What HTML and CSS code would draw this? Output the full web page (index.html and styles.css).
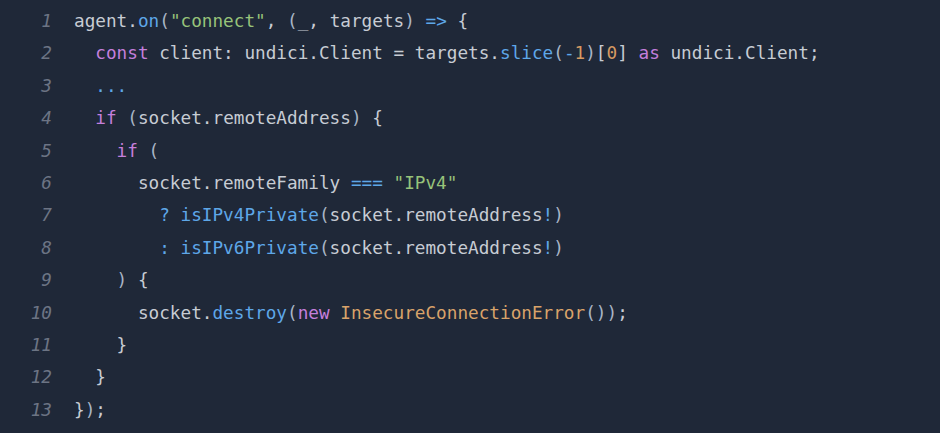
FILE: index.html
```html
<!DOCTYPE html>
<html>
<head>
<meta charset="utf-8">
<link rel="stylesheet" href="styles.css">
</head>
<body>
<div class="code">
<div class="ln"><span class="num">1</span><span class="src">agent.<span class="fn">on</span><span class="p">(</span><span class="str">"connect"</span>, <span class="p">(</span>_, targets<span class="p">)</span> <span class="op">=&gt;</span> {</span></div>
<div class="ln"><span class="num">2</span><span class="src">  <span class="kw">const</span> client: undici.Client = targets.<span class="fn">slice</span><span class="p">(</span><span class="op">-</span><span class="nm">1</span><span class="p">)</span>[<span class="nm">0</span>] <span class="kw">as</span> undici.Client;</span></div>
<div class="ln"><span class="num">3</span><span class="src">  <span class="op">...</span></span></div>
<div class="ln"><span class="num">4</span><span class="src">  <span class="kw">if</span> <span class="p">(</span>socket.remoteAddress<span class="p">)</span> {</span></div>
<div class="ln"><span class="num">5</span><span class="src">    <span class="kw">if</span> <span class="p">(</span></span></div>
<div class="ln"><span class="num">6</span><span class="src">      socket.remoteFamily <span class="op">===</span> <span class="str">"IPv4"</span></span></div>
<div class="ln"><span class="num">7</span><span class="src">        <span class="op">?</span> <span class="fn">isIPv4Private</span><span class="p">(</span>socket.remoteAddress<span class="op">!</span><span class="p">)</span></span></div>
<div class="ln"><span class="num">8</span><span class="src">        <span class="op">:</span> <span class="fn">isIPv6Private</span><span class="p">(</span>socket.remoteAddress<span class="op">!</span><span class="p">)</span></span></div>
<div class="ln"><span class="num">9</span><span class="src">    <span class="p">)</span> {</span></div>
<div class="ln"><span class="num">10</span><span class="src">      socket.<span class="fn">destroy</span><span class="p">(</span><span class="kw">new</span> <span class="cls">InsecureConnectionError</span><span class="p">())</span>;</span></div>
<div class="ln"><span class="num">11</span><span class="src">    }</span></div>
<div class="ln"><span class="num">12</span><span class="src">  }</span></div>
<div class="ln"><span class="num">13</span><span class="src">}<span class="p">)</span>;</span></div>
</div>
</body>
</html>
```

FILE: styles.css
```css
html, body {
  margin: 0;
  padding: 0;
  background: #1f2838;
  height: 100%;
}
.code {
  padding-top: 5px;
  font-family: "DejaVu Sans Mono", "Liberation Mono", monospace;
  font-size: 17.7px;
  line-height: 32.4px;
  color: #c7ccd4;
}
.ln {
  display: flex;
  white-space: pre;
}
.num {
  width: 52px;
  text-align: right;
  padding-right: 22px;
  font-style: italic;
  color: #6c7484;
  flex: none;
}
.src { white-space: pre; }
.kw { color: #c47fdc; }
.fn { color: #5ea7e8; }
.str { color: #97c37a; }
.nm { color: #d69a62; }
.op { color: #5ea7e8; }
.p { color: #a9b5c6; }
.cls { color: #d9a36a; }
```
